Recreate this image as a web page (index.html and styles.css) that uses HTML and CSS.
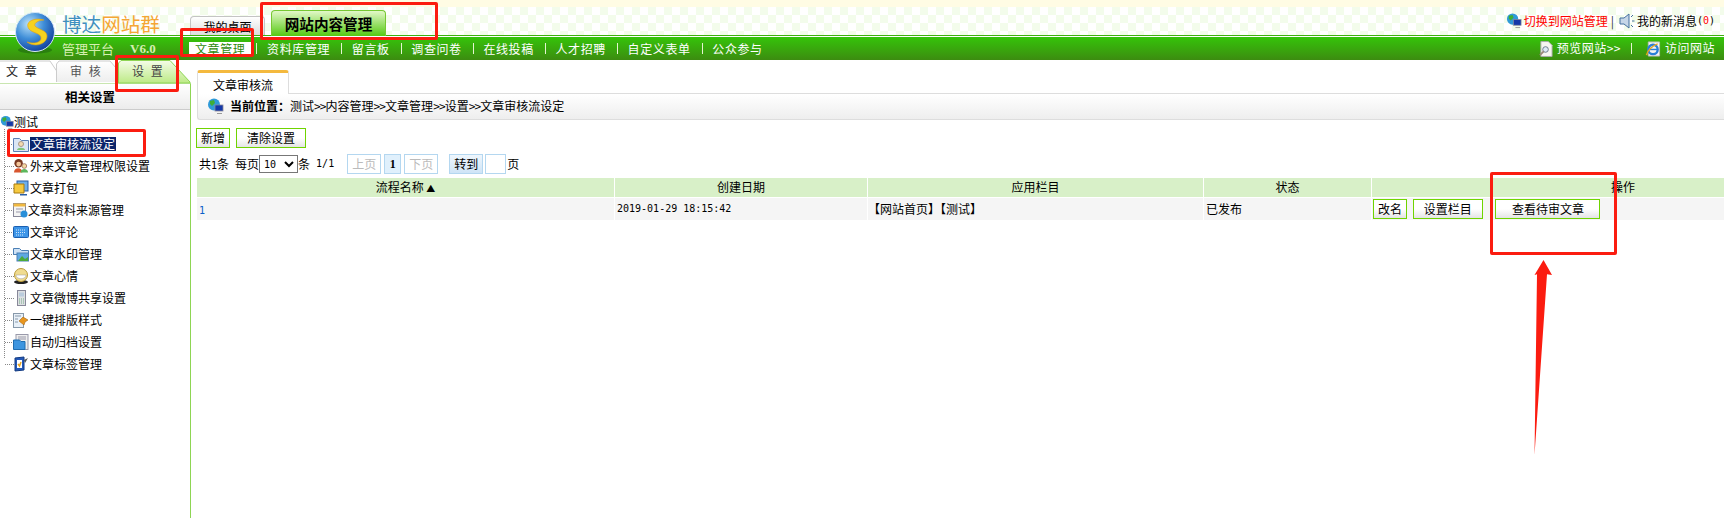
FILE: index.html
```html
<!DOCTYPE html>
<html lang="zh-CN">
<head>
<meta charset="utf-8">
<title>博达网站群 管理平台</title>
<link rel="stylesheet" href="styles.css">
</head>
<body>
<svg width="0" height="0" class="defs">
  <defs>
    <radialGradient id="ball" cx="35%" cy="30%" r="75%"><stop offset="0" stop-color="#bfe4fa"/><stop offset=".5" stop-color="#3f8ed8"/><stop offset="1" stop-color="#123f9c"/></radialGradient>
    <linearGradient id="tabOn" x1="0" y1="0" x2="0" y2="1"><stop offset="0" stop-color="#f4fce8"/><stop offset="1" stop-color="#bdea86"/></linearGradient>
    <linearGradient id="tabOff" x1="0" y1="0" x2="0" y2="1"><stop offset="0" stop-color="#fff"/><stop offset="1" stop-color="#eee"/></linearGradient>
    <symbol id="globe" viewBox="0 0 17 17">
      <circle cx="7" cy="6.5" r="6" fill="#2f9ad8"/>
      <path d="M3 3l4-1 1 3-3 3-2-2zM9 8l3-1-1 4-2 1z" fill="#3fae35"/>
      <rect x="8" y="7" width="8" height="6" fill="#1438a8" stroke="#889" stroke-width=".8"/>
      <path d="M10 15h5v1h-5z" fill="#999"/>
    </symbol>
  </defs>
</svg>

<div class="strip"></div>
<header class="banner">
  <div class="brand"><span class="brand-blue">博达</span><span class="brand-orange">网站群</span></div>
  <a class="top-tab">我的桌面</a>
  <a class="top-tab top-tab-on">网站内容管理</a>
  <div class="banner-right">
    <svg class="ico-16"><use href="#globe"/></svg>
    <a class="switch">切换到网站管理</a>
    <span class="bar-sep">|</span>
    <svg class="ico-16" viewBox="0 0 16 16"><path d="M1 5h4l5-4v14l-5-4H1z" fill="#c6d6e8" stroke="#45709f"/><path d="M12 4l2-2M13 8h2.500M12 12l2 2" stroke="#45709f"/></svg>
    <a class="msg">我的新消息</a>
    <span class="count">(<em>0</em>)</span>
  </div>
</header>
<nav class="nav">
  <div class="brand-sub"><span>管理平台</span><b>V6.0</b></div>
  <a class="nav-item nav-item-on">文章管理</a><i class="nav-sep"></i>
  <a class="nav-item">资料库管理</a><i class="nav-sep"></i>
  <a class="nav-item">留言板</a><i class="nav-sep"></i>
  <a class="nav-item">调查问卷</a><i class="nav-sep"></i>
  <a class="nav-item">在线投稿</a><i class="nav-sep"></i>
  <a class="nav-item">人才招聘</a><i class="nav-sep"></i>
  <a class="nav-item">自定义表单</a><i class="nav-sep"></i>
  <a class="nav-item">公众参与</a>
  <div class="nav-right">
    <svg class="ico-15" viewBox="0 0 15 17"><path d="M2 .5h8l4 4v12H2z" fill="#f6f6f0" stroke="#aaa"/><circle cx="7" cy="9" r="3" fill="#dfeaf5" stroke="#678"/><path d="M5 11l-4 4" stroke="#987" stroke-width="2"/></svg>
    <a class="nav-link">预览网站&gt;&gt;</a>
    <i class="nav-sep nav-sep-right"></i>
    <svg class="ico-15 ie" viewBox="0 0 16 17"><path d="M3 1h12v15H3z" fill="#f4f4f4" stroke="#bbb"/><circle cx="8" cy="9" r="5" fill="none" stroke="#2a7fd8" stroke-width="2.500"/><path d="M4 9h9" stroke="#2a7fd8" stroke-width="1.500"/><path d="M1 15c1-5 6-10 12-12" fill="none" stroke="#e8a520" stroke-width="1.500"/></svg>
    <a class="nav-link">访问网站</a>
  </div>
</nav>

<div class="shell">
  <aside class="side">
    <div class="side-tabs">
      <div class="side-tab side-tab-1">
        <svg class="tab-shape" viewBox="0 0 64 23"><path d="M0 1H50L64 22" fill="none" stroke="#ccc"/></svg>
        <span>文 章</span>
      </div>
      <div class="side-tab side-tab-2">
        <svg class="tab-shape" viewBox="0 0 74 23"><path d="M.5 22V4L3 1H54L72 22" fill="url(#tabOff)" stroke="#ccc"/></svg>
        <span>审 核</span>
      </div>
      <div class="side-tab side-tab-3">
        <svg class="tab-shape" viewBox="0 0 73 23"><path d="M.5 23V3L3 .5H52L72 22V23z" fill="url(#tabOn)" stroke="#8ed554"/></svg>
        <span>设 置</span>
      </div>
    </div>
    <div class="side-body">
      <h2 class="side-title">相关设置</h2>
      <div class="tree">
        <div class="tree-root"><svg class="ico-root"><use href="#globe"/></svg><span>测试</span></div>
        <ul class="tree-list">
          <li class="tree-row"><svg class="ico-tree" viewBox="0 0 16 16"><path d="M.5 2.500h6l2 2h7v11H.5z" fill="#dbe6f5" stroke="#5b7fb5"/><circle cx="8" cy="8" r="2.500" fill="#f3d9b0" stroke="#a98"/><path d="M4 14c0-3 8-3 8 0z" fill="#7fc47a"/></svg><span class="selected">文章审核流设定</span></li>
          <li class="tree-row"><svg class="ico-tree" viewBox="0 0 17 16"><circle cx="6" cy="5" r="4.500" fill="#7a3a22"/><circle cx="6" cy="6" r="2.500" fill="#f3c59a"/><path d="M1 15c0-6 9-6 9 0z" fill="#d8562f"/><circle cx="12" cy="8" r="2.500" fill="#f3d9a0" stroke="#a76"/><path d="M8 15c0-5 8-5 8 0z" fill="#5cb85c"/></svg><span>外来文章管理权限设置</span></li>
          <li class="tree-row"><svg class="ico-tree" viewBox="0 0 16 16"><rect x="4" y="1" width="11" height="10" fill="#6fb0ea" stroke="#2a5fa8"/><path d="M1 4h10v9H1z" fill="#f5c93f" stroke="#a87a10"/><path d="M7 14h7v1.500H7z" fill="#2a5fa8"/></svg><span>文章打包</span></li>
          <li class="tree-row tree-row-tight"><svg class="ico-tree" viewBox="0 0 16 16"><rect x=".5" y="1.500" width="12" height="13" fill="#f4f4f4" stroke="#889"/><path d="M.5 1.500h12v3H.5z" fill="#f0b840"/><path d="M3 7h7M3 10h5" stroke="#99a"/><circle cx="11" cy="12" r="3.500" fill="#2a8fd8"/></svg><span>文章资料来源管理</span></li>
          <li class="tree-row"><svg class="ico-tree" viewBox="0 0 16 16"><rect x=".5" y="2.500" width="15" height="11" rx="1" fill="#3d95e8" stroke="#1b5fb0"/><path d="M3 6h10M3 8.500h10M3 11h7" stroke="#cfe6fb" stroke-dasharray="1 1"/></svg><span>文章评论</span></li>
          <li class="tree-row"><svg class="ico-tree" viewBox="0 0 16 16"><path d="M.5 2.500h6l2 2h7v4H.5z" fill="#cfe2f5" stroke="#4b7fb5"/><rect x="4" y="7" width="11.500" height="8" fill="#5fa8e0" stroke="#4b7fb5"/><path d="M5 15l4-5 3 3 3-2v4z" fill="#4cab3a"/></svg><span>文章水印管理</span></li>
          <li class="tree-row"><svg class="ico-tree" viewBox="0 0 16 16"><ellipse cx="8" cy="14" rx="7" ry="2" fill="#222"/><circle cx="8" cy="7" r="6.500" fill="#f0dc90" stroke="#b99a3a"/><path d="M3 7h10c0 5-10 5-10 0z" fill="#fff" stroke="#999" stroke-width=".5"/></svg><span>文章心情</span></li>
          <li class="tree-row"><svg class="ico-tree" viewBox="0 0 16 16"><rect x="4.500" y=".5" width="8" height="15" fill="#dde0e2" stroke="#889"/><rect x="6" y="2.500" width="5" height="4" fill="#bcd"/><path d="M6 9h5M6 11h5M6 13h5" stroke="#7a8" stroke-dasharray="1 1"/></svg><span>文章微博共享设置</span></li>
          <li class="tree-row"><svg class="ico-tree" viewBox="0 0 16 16"><rect x=".5" y="1.500" width="10" height="14" fill="#e8f0f8" stroke="#89a"/><path d="M2 4h6M2 7h3M2 10h3" stroke="#89a"/><path d="M6 9l4-4 5 3-3 2-1 3z" fill="#e8961e" stroke="#a86510" stroke-width=".6"/></svg><span>一键排版样式</span></li>
          <li class="tree-row"><svg class="ico-tree" viewBox="0 0 16 16"><rect x="3" y=".5" width="12" height="15" fill="#eee" stroke="#99a"/><path d="M5 3h8M5 5h8" stroke="#99a"/><path d="M.5 6h6l1.500 1.500H12v8H.5z" fill="#3d95e0" stroke="#1f6db0"/></svg><span>自动归档设置</span></li>
          <li class="tree-row"><svg class="ico-tree" viewBox="0 0 16 16"><path d="M2 2l9-1v13l-9 1z" fill="#2458b8" stroke="#123a80"/><path d="M4 4h5v8H4z" fill="#fff"/><path d="M5 8l1.500 2L8 6" fill="none" stroke="#e8a520" stroke-width="1.500"/><path d="M11 4l4-2-3 5z" fill="#555"/></svg><span>文章标签管理</span></li>
        </ul>
      </div>
    </div>
  </aside>

  <main class="content">
    <div class="tabs"><a class="tab">文章审核流</a></div>
    <div class="crumb">
      <svg class="ico-crumb"><use href="#globe"/></svg>
      <span><b>当前位置：</b>测试<span class="gt">&gt;&gt;</span>内容管理<span class="gt">&gt;&gt;</span>文章管理<span class="gt">&gt;&gt;</span>设置<span class="gt">&gt;&gt;</span>文章审核流设定</span>
    </div>
    <div class="actions">
      <button class="btn btn-small" type="button">新增</button>
      <button class="btn btn-clear" type="button">清除设置</button>
    </div>
    <div class="pager">
      <span class="pg-total">共<span class="latin">1</span>条</span>
      <span class="pg-size">每页</span>
      <select class="pg-select"><option>10</option></select>
      <span>条</span>
      <span class="latin pg-count">1/1</span>
      <a class="pg-btn pg-prev">上页</a>
      <a class="pg-num">1</a>
      <a class="pg-btn">下页</a>
      <a class="pg-go">转到</a>
      <input class="pg-input" type="text" aria-label="页码">
      <span>页</span>
    </div>
    <div class="grid-wrap">
      <table class="grid">
        <colgroup><col class="c1"><col class="c2"><col class="c3"><col class="c4"><col class="c5"></colgroup>
        <thead>
          <tr><th>流程名称 <span class="sort">▲</span></th><th>创建日期</th><th>应用栏目</th><th>状态</th><th>操作</th></tr>
        </thead>
        <tbody>
          <tr>
            <td><a class="link latin">1</a></td>
            <td class="latin">2019-01-29 18:15:42</td>
            <td class="cell-tight">【网站首页】【测试】</td>
            <td>已发布</td>
            <td class="ops">
              <button class="btn btn-rename" type="button">改名</button>
              <button class="btn btn-column" type="button">设置栏目</button>
              <button class="btn btn-view" type="button">查看待审文章</button>
            </td>
          </tr>
        </tbody>
      </table>
    </div>
  </main>
</div>

<svg class="logo" viewBox="0 0 42 42">
  <ellipse cx="21" cy="38" rx="17" ry="3.500" fill="#1b5e10" opacity=".5"/>
  <circle cx="21" cy="20" r="19.500" fill="url(#ball)" stroke="#d7e8f5"/>
  <path d="M30 8C20 5 10 10 15 17c3 4 12 4 12 9 0 5-8 6-14 4 8 6 20 2 20-6 0-6-10-7-12-10-1.500-3 4-6 9-6z" fill="#f7d21e" stroke="#e0a010" stroke-width=".6"/>
</svg>
<div class="mark mark-1"></div>
<div class="mark mark-2"></div>
<div class="mark mark-3"></div>
<div class="mark mark-4"></div>
<div class="mark mark-5"></div>
<svg class="arrow" viewBox="0 0 20 197"><path d="M10.500 1L19 16l-5-.7L1.500 196l2.500-180.700L1.500 16z" fill="#fb1c10"/></svg>
</body>
</html>
```

FILE: styles.css
```css
* { box-sizing: border-box; }
html, body { margin: 0; padding: 0; }
body {
  position: relative;
  width: 1724px;
  height: 518px;
  overflow: hidden;
  background: #fff;
  color: #000;
  font: 12px/1.2 "Noto Sans CJK SC", sans-serif;
  display: flex;
  flex-direction: column;
}
.defs { position: absolute; }
a { color: inherit; text-decoration: none; }
em { font-style: normal; }
i { font-style: normal; }
.latin { font-family: "DejaVu Sans Mono", "Noto Sans CJK SC", monospace; font-size: 10px; }

.strip { height: 7px; flex: none; background: #fffce4; }

.banner {
  flex: none;
  height: 29px;
  display: flex;
  align-items: flex-end;
  border-bottom: 1px solid #3cb00e;
  background: repeating-conic-gradient(#f3fceb 0 25%, #fff 0 50%) 0 0 / 16px 16px;
}
.brand {
  width: 190px;
  flex: none;
  padding-left: 62px;
  align-self: flex-start;
  padding-top: 4px;
  font-size: 19.600px;
  line-height: 26px;
  white-space: nowrap;
}
.brand-blue { color: #3f8fbf; }
.brand-orange { color: #f5a634; }
.top-tab {
  width: 75px;
  height: 19px;
  line-height: 19px;
  text-align: center;
  border: 1px solid #c4c4c4;
  border-bottom: 0;
  border-radius: 4px 4px 0 0;
  background: linear-gradient(#fff, #dcdcdc);
}
.top-tab-on {
  width: 115px;
  height: 26px;
  line-height: 25px;
  margin-left: 6px;
  margin-bottom: -1px;
  border-color: #76c832;
  background: linear-gradient(#e2f8c8, #55c912);
  font-size: 14.600px;
  font-weight: 700;
}
.banner-right {
  margin-left: auto;
  align-self: center;
  padding-right: 9px;
  display: flex;
  align-items: center;
  white-space: nowrap;
}
.ico-16 { width: 16px; height: 16px; flex: none; }
.switch { color: #f00; margin-left: 2px; }
.bar-sep { margin: 0 5px 0 3px; color: #333; }
.msg { margin-left: 2px; }
.count { font-family: "DejaVu Sans Mono", monospace; font-size: 10px; }
.count em { color: #f00; }

.nav {
  flex: none;
  margin-top: 1px;
  height: 23px;
  display: flex;
  align-items: center;
  color: #fff;
  background: linear-gradient(#35c40a, #3c8c10);
  white-space: nowrap;
}
.brand-sub {
  width: 189px;
  flex: none;
  padding-left: 62px;
  display: flex;
  align-items: center;
  font-size: 13px;
  color: #d6efb0;
}
.brand-sub b { margin-left: 16px; font-family: "Liberation Serif", serif; }
.nav-item { margin: 0 11px 0 9.700px; letter-spacing: .6px; line-height: 14px; }
.nav-item-on {
  margin: 0 5px 0 0;
  padding: 0 6px;
  background: #fff;
  color: #2d8a0c;
}
.nav-sep { width: 1px; height: 11px; background: #e4f5d0; flex: none; }
.nav-right {
  margin-left: auto;
  padding-right: 9px;
  display: flex;
  align-items: center;
}
.ico-15 { width: 14px; height: 16px; flex: none; }
.ie { width: 16px; }
.nav-link { margin-left: 4px; letter-spacing: .5px; }
.nav-sep-right { margin: 0 13px 0 10px; }

.shell { flex: 1; min-height: 0; display: flex; }

.side { width: 191px; flex: none; display: flex; flex-direction: column; }
.side-tabs { flex: none; height: 23px; display: flex; }
.side-tab {
  position: relative;
  height: 23px;
  color: #222;
  line-height: 22px;
  text-align: left;
  white-space: nowrap;
}
.side-tab span { position: relative; margin-left: 14px; letter-spacing: 2px; }
.side-tab-1 { width: 56px; }
.side-tab-1 span { margin-left: 6px; }
.side-tab-2 { width: 62px; color: #555; }
.side-tab-3 { width: 73px; color: #444; }
.tab-shape { position: absolute; left: 0; top: 0; width: 100%; height: 100%; overflow: visible; }
.side-tab-1 .tab-shape { width: 64px; }
.side-tab-2 .tab-shape { width: 74px; }

.side-body { flex: 1; min-height: 0; border-right: 1px solid #8ed554; border-top: 1px solid #c9e6b0; }
.side-title {
  margin: 0;
  height: 26px;
  padding-right: 10px;
  line-height: 25px;
  font-size: 12.500px;
  font-weight: 700;
  text-align: center;
  border-bottom: 1px solid #ccc;
  background: linear-gradient(#fff, #ececec);
}
.tree { padding-top: 5px; }
.tree-root { height: 14px; display: flex; align-items: center; }
.ico-root { width: 14px; height: 15px; flex: none; }
.tree-list {
  list-style: none;
  margin: 0 0 0 4px;
  padding: 4px 0 0;
  border-left: 1px dotted #888;
  height: 229px;
}
.tree-row {
  height: 22px;
  display: flex;
  align-items: center;
  white-space: nowrap;
  background-repeat: no-repeat;
  background-image: repeating-linear-gradient(90deg, #888 0 1px, transparent 1px 2px);
  background-size: 9px 1px;
  background-position: 0 50%;
}
.ico-tree { width: 16px; height: 16px; flex: none; margin: 0 1px 0 8px; }
.tree-row-tight span { margin-left: -2px; }
.selected { background: #0a246a; color: #fff; padding: 0 1px; line-height: 14px; }

.content { flex: 1; min-width: 0; padding: 10px 0 0 6px; }
.tabs { height: 24px; display: flex; }
.tab {
  width: 92px;
  height: 24px;
  line-height: 23px;
  text-align: center;
  border: 1px solid #ddd;
  border-top: 3px solid #f4b93e;
  border-bottom: 0;
  border-radius: 3px 3px 0 0;
  background: #fff;
  position: relative;
  z-index: 1;
}
.crumb {
  height: 27px;
  margin-top: -1px;
  display: flex;
  align-items: center;
  padding-left: 9px;
  border: 1px solid #ddd;
  border-width: 1px 0 1px 1px;
  border-radius: 0 0 0 3px;
  background: linear-gradient(#fff, #eee);
}
.crumb b { font-weight: 700; }
.gt { letter-spacing: -.9px; }
.ico-crumb { width: 17px; height: 17px; margin-right: 6px; flex: none; }

.btn {
  height: 20px;
  padding: 0;
  border: 1px solid #6fd400;
  background: linear-gradient(#fff 50%, #e4e4e4);
  font: inherit;
  color: #000;
}
.actions { margin: 8px 0 0 -1px; height: 20px; display: flex; gap: 6px; }
.btn-small { width: 34px; }
.btn-clear { width: 70px; }

.pager { margin-top: 6px; height: 20px; display: flex; align-items: center; padding-left: 2px; white-space: nowrap; }
.pg-size { margin-left: 6px; }
.pg-select {
  width: 39px;
  height: 18px;
  padding: 0;
  margin: 0;
  font: 10px "DejaVu Sans Mono", monospace;
  border: 1px solid #777;
  background: #fff;
}
.pg-count { margin-left: 6px; }
.pg-btn, .pg-num, .pg-go {
  height: 20px;
  line-height: 18px;
  text-align: center;
  border: 1px solid #b4d7f0;
  color: #bbb;
}
.pg-btn { width: 34px; }
.pg-prev { margin-left: 13px; }
.pg-num { width: 17px; margin: 0 3px; background: #e0f0fc; color: #000; font-weight: 700; font-family: "Liberation Serif", serif; }
.pg-go { width: 34px; margin-left: 11px; color: #000; background: linear-gradient(#eef6fd, #cfe4f6); }
.pg-input { width: 21px; height: 20px; margin: 0 1px 0 2px; padding: 0; border: 1px solid #b4d7f0; }

.grid-wrap { margin: 3px 0 0 -1px; overflow: hidden; }
.grid {
  width: 1679px;
  table-layout: fixed;
  border-collapse: separate;
  border-spacing: 1px;
}
.c1 { width: 417px; }
.c2 { width: 252px; }
.c3 { width: 335px; }
.c4 { width: 167px; }
.c5 { width: 502px; }
th, td { padding: 0 2px; font-weight: 400; white-space: nowrap; overflow: hidden; }
th { height: 19px; background: #d8f0c8; text-align: center; }
td { height: 22px; background: #f5f5f5; text-align: left; }
td.cell-tight { padding-left: 0; }
.sort { font-size: 9px; }
.link { color: #0a5fc8; }
td.ops { padding-left: 1px; }
.ops .btn { vertical-align: middle; }
.btn-rename { width: 34px; margin-right: 3px; }
.btn-column { width: 70px; margin-right: 10px; }
.btn-view { width: 105px; }

.logo { position: absolute; left: 14px; top: 12px; width: 42px; height: 42px; }
.mark {
  position: absolute;
  border: 3px solid #fb1c10;
  border-radius: 2px;
}
.mark-1 { left: 260px; top: 2px; width: 178px; height: 38px; }
.mark-2 { left: 180px; top: 28px; width: 74px; height: 29px; }
.mark-3 { left: 115px; top: 55px; width: 64px; height: 37px; }
.mark-4 { left: 7px; top: 129px; width: 139px; height: 28px; }
.mark-5 { left: 1490px; top: 172px; width: 127px; height: 83px; }
.arrow { position: absolute; left: 1533px; top: 259px; width: 20px; height: 197px; }
```
